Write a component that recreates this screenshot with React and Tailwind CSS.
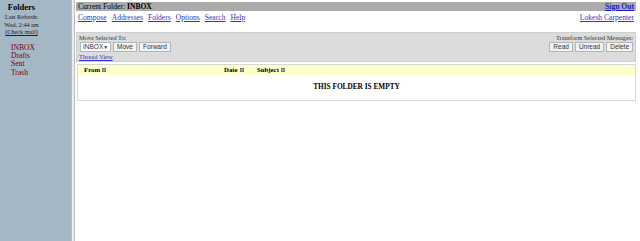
import React from 'react';

const serif = { fontFamily: '"Liberation Serif", "Times New Roman", serif' };

function Btn({ children }) {
    return (
        <span className="inline-flex h-[10px] items-center border border-[#b5b5b5] bg-[#f2f2f2] px-[3px] text-[6.5px] leading-none text-[#333]" style={{ fontFamily: '"Liberation Sans", Arial, sans-serif' }}>
            {children}
        </span>
    );
}

function SortIcon() {
    return <span className="ml-[2px] inline-block h-[4px] w-[4px] border border-[#777] bg-[#aaa] align-middle" />;
}

export default function App() {
    const links = ['Compose', 'Addresses', 'Folders', 'Options', 'Search', 'Help'];
    const folders = ['INBOX', 'Drafts', 'Sent', 'Trash'];

    return (
        <div className="flex h-[241px] w-[640px] bg-white text-black" style={serif}>
            {/* left frame */}
            <div className="w-[71px] shrink-0 bg-[#a4b7c5]">
                <div className="w-[43px] pt-[3px] text-center">
                    <div className="text-[8.5px] font-bold leading-[8px]">Folders</div>
                    <div className="mt-[2px] text-[6.2px] leading-[7.5px] text-[#222]">
                        <div>Last Refresh:</div>
                        <div>Wed, 2:44 am</div>
                        <div className="underline">(Check mail)</div>
                    </div>
                </div>
                <div className="mt-[8px] pl-[11px] text-[7.6px] leading-[8.4px] text-[#800000]">
                    {folders.map((f) => (
                        <div key={f}>{f}</div>
                    ))}
                </div>
            </div>
            <div className="w-[4px] shrink-0 border-x border-[#bdbdbd] bg-[#ececec]" />

            {/* right frame */}
            <div className="min-w-0 flex-1 pl-[1px] pr-[4px] pt-[2px]">
                <div className="flex h-[9px] items-center justify-between bg-[#ababab] px-[2px] text-[7.6px] leading-none">
                    <span>Current Folder: <b>INBOX</b></span>
                    <a className="font-bold text-[#1a1acc] underline">Sign Out</a>
                </div>
                <div className="flex items-start justify-between px-[2px] pt-[2px] text-[7.6px] leading-[9px] text-[#3434c4]">
                    <div className="flex gap-[5px]">
                        {links.map((l) => (
                            <a key={l} className="underline">{l}</a>
                        ))}
                    </div>
                    <a className="underline">Lokesh Carpenter</a>
                </div>

                <div className="mt-[10px] flex h-[30px] justify-between border border-[#cfcfcf] bg-[#dcdcdc] px-[2px] pt-[1px]">
                    <div>
                        <div className="text-[6.3px] leading-[7px] text-[#333]">Move Selected To:</div>
                        <div className="mt-[1px] flex gap-[2px] pl-[1px]">
                            <span className="inline-flex h-[10px] w-[31px] items-center justify-between border border-[#b5b5b5] bg-white px-[2px] text-[6.5px] leading-none text-[#333]" style={{ fontFamily: '"Liberation Sans", Arial, sans-serif' }}>
                                INBOX<span className="text-[5px]">▼</span>
                            </span>
                            <Btn>Move</Btn>
                            <Btn>Forward</Btn>
                        </div>
                        <div className="mt-[1px] text-[6.5px] leading-[8px] text-[#3434c4] underline">Thread View</div>
                    </div>
                    <div className="flex flex-col items-end">
                        <div className="text-[6.3px] leading-[7px] text-[#333]">Transform Selected Messages:</div>
                        <div className="mt-[1px] flex gap-[2px]">
                            <Btn>Read</Btn>
                            <Btn>Unread</Btn>
                            <Btn>Delete</Btn>
                        </div>
                    </div>
                </div>

                <div className="mt-[2px] ml-[1px] h-[37px] border border-[#d6d6d6]">
                    <div className="flex h-[10px] items-center bg-[#ffffcc] text-[6.8px] font-bold leading-none">
                        <span className="ml-[6px] w-[140px]">From<SortIcon /></span>
                        <span className="w-[33px]">Date<SortIcon /></span>
                        <span>Subject<SortIcon /></span>
                    </div>
                    <div className="pt-[8px] text-center text-[7.3px] font-bold leading-none">THIS FOLDER IS EMPTY</div>
                </div>
            </div>
        </div>
    );
}
